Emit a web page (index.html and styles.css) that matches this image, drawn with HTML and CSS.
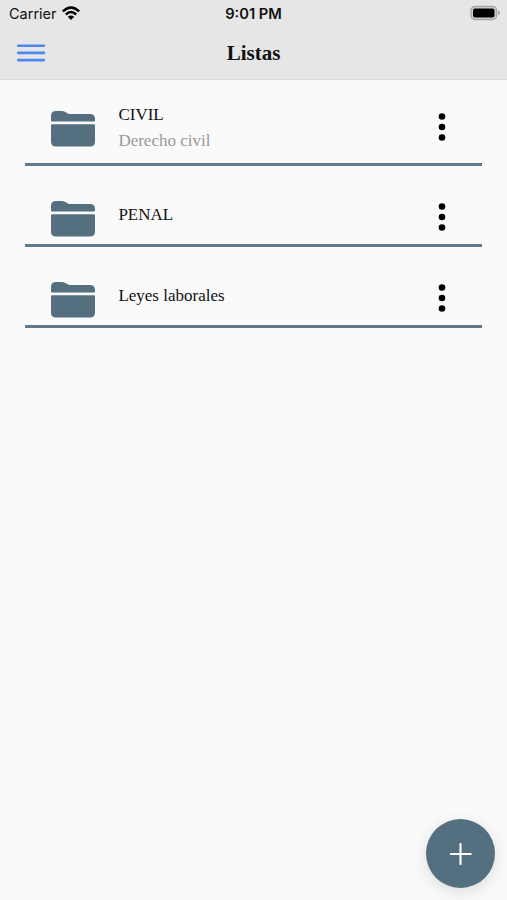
FILE: index.html
```html
<!DOCTYPE html>
<html lang="es">
<head>
    <meta charset="UTF-8">
    <meta name="viewport" content="width=device-width, initial-scale=1">
    <title>Listas</title>
    <link rel="stylesheet" href="styles.css">
</head>
<body>
    <svg class="symbols" width="0" height="0">
        <symbol id="folder" viewBox="0 0 44 36">
            <path d="M0 9.500V5Q0 0 5 0H11Q13.500 0 15.300 1.500L16 2.100Q17.300 3.100 19 3.100H39Q44 3.100 44 8.100V9.500Q44 10.500 43 10.500H1Q0 10.500 0 9.500Z"/>
            <path d="M1 13.200H43Q44 13.200 44 14.200V30.500Q44 35.500 39 35.500H5Q0 35.500 0 30.500V14.200Q0 13.200 1 13.200Z"/>
        </symbol>
        <symbol id="dots" viewBox="0 0 8 28">
            <circle cx="4" cy="3.500" r="3.300"/>
            <circle cx="4" cy="14" r="3.300"/>
            <circle cx="4" cy="24.500" r="3.300"/>
        </symbol>
    </svg>

    <header class="header">
        <div class="status">
            <div class="carrier">
                <span>Carrier</span>
                <svg class="wifi" width="18" height="14" viewBox="0 0 18 14">
                    <path d="M.8 5.300Q9-2.500 17.200 5.300M3.800 8.500Q9 3.700 14.200 8.500" fill="none" stroke="#000" stroke-width="2.400"/>
                    <path d="M9 14L5.800 10.800Q9 8 12.200 10.800Z"/>
                </svg>
            </div>
            <div class="time">9:01 PM</div>
            <div class="battery">
                <svg width="32" height="16" viewBox="0 0 32 16">
                    <rect x="2" y="1.500" width="25.500" height="13" rx="4" fill="#d4d4d4" stroke="#a5a5a5" stroke-width="1.400"/>
                    <rect x="4" y="3.500" width="21.500" height="9" rx="2"/>
                    <path d="M29 5.500Q31 6.200 31 7.800T29 10.100Z" fill="#a5a5a5"/>
                </svg>
            </div>
        </div>
        <div class="toolbar">
            <button class="menu" aria-label="Menú">
                <svg width="29" height="18" viewBox="0 0 29 18">
                    <path d="M1.300 1.700H26.900M1.300 8.900H26.900M1.300 16.100H26.900" stroke="#4e87ee" stroke-width="2.600" stroke-linecap="round"/>
                </svg>
            </button>
            <h1>Listas</h1>
        </div>
    </header>

    <main class="lists">
        <div class="item first">
            <svg class="folder"><use href="#folder"/></svg>
            <div class="text">
                <h2>CIVIL</h2>
                <p>Derecho civil</p>
            </div>
            <svg class="dots"><use href="#dots"/></svg>
        </div>
        <div class="item">
            <svg class="folder"><use href="#folder"/></svg>
            <div class="text">
                <h2>PENAL</h2>
            </div>
            <svg class="dots"><use href="#dots"/></svg>
        </div>
        <div class="item">
            <svg class="folder"><use href="#folder"/></svg>
            <div class="text">
                <h2>Leyes laborales</h2>
            </div>
            <svg class="dots"><use href="#dots"/></svg>
        </div>
    </main>

    <button class="add" aria-label="Agregar">
        <svg width="22" height="22" viewBox="0 0 22 22">
            <path d="M10.500 1V21M.7 11H20.700" stroke="#fff" stroke-width="2.100" stroke-linecap="round"/>
        </svg>
    </button>
</body>
</html>
```
FILE: styles.css
```css
* {
    box-sizing: border-box;
}
body {
    margin: 0;
    min-height: 100vh;
    background-color: #fafafa;
    font-family: "Liberation Serif", "Times New Roman", serif;
    color: #111;
}
h1, h2, p {
    margin: 0;
}
button {
    border: none;
    padding: 0;
}
.symbols {
    display: block;
}
.header {
    height: 80px;
    background-color: #e6e6e6;
    border-bottom: 1px solid #d9d9d9;
}
.status {
    display: grid;
    grid-template-columns: 1fr auto 1fr;
    align-items: center;
    height: 27px;
    padding: 0 6px 0 9px;
    font-family: Inter, sans-serif;
    font-size: 14.5px;
}
.carrier {
    display: flex;
    align-items: center;
    gap: 5px;
}
.wifi {
    margin-top: -2px;
}
.time {
    margin-right: 3px;
    font-weight: 600;
    font-size: 14.7px;
}
.battery {
    display: flex;
    justify-content: flex-end;
    margin-top: -1px;
}
.toolbar {
    display: grid;
    grid-template-columns: 1fr auto 1fr;
    align-items: center;
    height: 52px;
    padding: 0 17px;
}
.toolbar h1 {
    font-size: 21px;
    line-height: 24px;
}
.menu {
    display: flex;
    background: none;
}
.lists {
    padding: 0 25px;
}
.item {
    display: flex;
    align-items: flex-start;
    height: 81px;
    padding: 35px 36.5px 0 26px;
    border-bottom: 3px solid #61798a;
}
.item.first {
    height: 86px;
    padding-top: 30.5px;
}
.folder {
    width: 44px;
    height: 36px;
    fill: #546f7f;
}
.text {
    flex: 1;
    margin-left: 23.4px;
    padding-top: 1px;
    font-size: 17px;
    line-height: 26px;
}
.first .text {
    margin-top: -10px;
}
.text h2 {
    font-size: 17px;
    font-weight: normal;
}
.text p {
    color: #999;
}
.dots {
    width: 8px;
    height: 28px;
    margin-top: 2px;
    fill: #000;
}
.first .dots {
    margin-top: 2.5px;
}
.add {
    position: fixed;
    right: 12px;
    bottom: 12px;
    display: flex;
    align-items: center;
    justify-content: center;
    width: 69px;
    height: 69px;
    border-radius: 50%;
    background-color: #546f7f;
    box-shadow: 0 4px 16px rgba(0,0,0,0.12);
}
```
